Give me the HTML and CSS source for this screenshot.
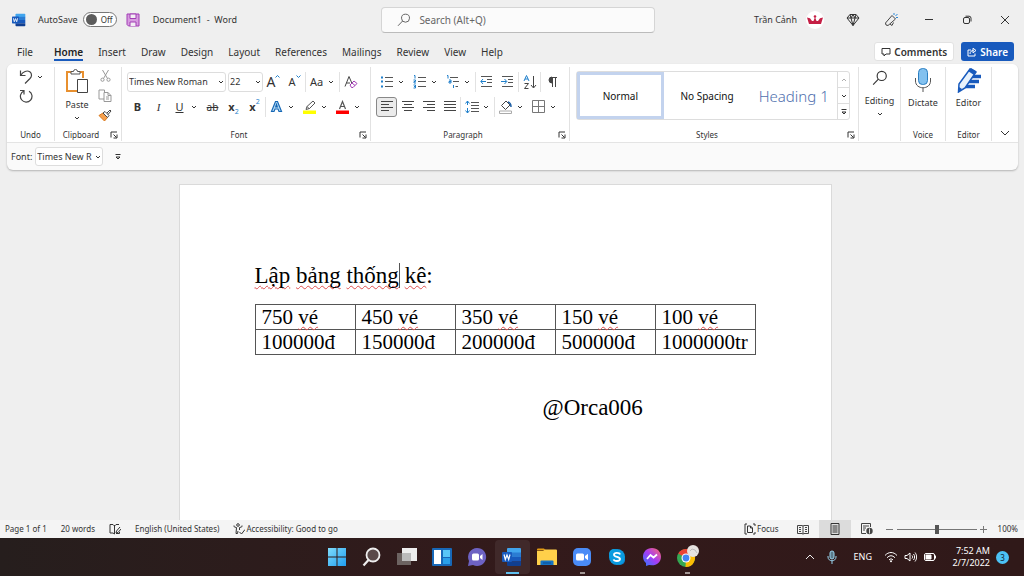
FILE: index.html
```html
<!DOCTYPE html>
<html lang="en">
<head>
  <meta charset="UTF-8">
  <meta name="viewport" content="width=device-width, initial-scale=1.0">
  <title>Document1 - Word</title>
  <link rel="stylesheet" href="styles.css">
</head>
<body>
  <!-- Shared icons -->
  <svg class="sprite" aria-hidden="true">
    <symbol id="chevron" viewBox="0 0 6 6"><path d="M1 2l2 2 2-2" fill="none" stroke="#333" stroke-width="1"/></symbol>
    <symbol id="launcher" viewBox="0 0 8 8"><path d="M1 6.500V1h6M3.500 3.500l3 3M7 3.500V7H3.500" fill="none" stroke="#333" stroke-width="1"/></symbol>
    <symbol id="lens" viewBox="0 0 14 14"><circle cx="8.500" cy="5.200" r="4" fill="none" stroke="currentColor"/><path d="M5.600 8L1 12.800" stroke="currentColor"/></symbol>
    <symbol id="more" viewBox="0 0 8 8"><path d="M1.500 1.500h5M2 4l2 2 2-2z" fill="none" stroke="#333"/></symbol>
    <symbol id="wordlogo" viewBox="0 0 20 20">
      <path d="M6 1h12a1 1 0 0 1 1 1v4H5V2a1 1 0 0 1 1-1z" fill="#41a5ee"/>
      <path d="M5 5.500h14v4.500H5z" fill="#2b7cd3"/>
      <path d="M5 10h14v4.500H5z" fill="#185abd"/>
      <path d="M5 14.500h14V18a1 1 0 0 1-1 1H6a1 1 0 0 1-1-1z" fill="#103f91"/>
      <rect x="0" y="5" width="10" height="10" rx="1" fill="#185abd"/>
      <path d="M2 7.500l1.300 5L5 8l1.700 4.500 1.300-5" fill="none" stroke="#fff" stroke-width="1.200"/>
    </symbol>
  </svg>

  <!-- Title bar -->
  <header class="titlebar">
    <div class="title-left">
      <svg class="app-icon" width="14" height="14"><use href="#wordlogo"/></svg>
      <label class="autosave">AutoSave
        <span class="toggle"><input type="checkbox"><span>Off</span></span>
      </label>
      <button class="save" aria-label="Save">
        <svg width="14" height="14" viewBox="0 0 14 14"><path d="M1 1h12v12H2.500L1 11.500z" fill="#d79be0" stroke="#a13cb4"/><path d="M4 1h6v4.500H4zM4 13V9h6v4" fill="#f3eef4" stroke="#a13cb4"/></svg>
      </button>
      <span>Document1&nbsp; -&nbsp; Word</span>
    </div>
    <label class="search">
      <svg width="14" height="14"><use href="#lens"/></svg>
      <input type="text" placeholder="Search (Alt+Q)" aria-label="Search">
    </label>
    <div class="title-right">
      <span class="user">Trần Cảnh</span>
      <span class="avatar">
        <svg width="18" height="18" viewBox="0 0 18 18"><path d="M1 6.500l3 .8 2 2.700h1.500L9 6l1.500 4H12l2-2.700 3-.8-2 6.500H3z" fill="#c51f45"/><circle cx="9" cy="5.500" r="1.300" fill="#c51f45"/></svg>
      </span>
      <button class="win" aria-label="Premium"><svg width="14" height="14" viewBox="0 0 14 14"><path d="M4 1.500h6l3 3.500-6 7.500L1 5zM1 5h12M4 1.500L5 5l2 7.500L9 5l1-3.500M5 5l2-3.500L9 5" fill="none" stroke="#333"/></svg></button>
      <button class="win" aria-label="Coming soon"><svg width="15" height="15" viewBox="0 0 15 15"><path d="M8 3.500l3.500 3.500-7.500 6.500-2-.5-.5-2zM6 12l2 1.500 1.500-3" fill="none" stroke="#444"/><path d="M10 3V1M11.500 4l2-2M12 5.500h2" stroke="#2b88d8"/></svg></button>
      <button class="win" aria-label="Minimize"><svg width="10" height="10" viewBox="0 0 10 10"><path d="M1 4.500h8" stroke="#333"/></svg></button>
      <button class="win" aria-label="Restore"><svg width="10" height="10" viewBox="0 0 10 10"><rect x="1.500" y="2.500" width="6" height="6" rx="1.500" fill="none" stroke="#333"/><path d="M3.500 1.200H7a2 2 0 0 1 2 2v3.300" fill="none" stroke="#333"/></svg></button>
      <button class="win" aria-label="Close"><svg width="10" height="10" viewBox="0 0 10 10"><path d="M1 1l8 8M9 1L1 9" stroke="#333"/></svg></button>
    </div>
  </header>

  <!-- Tabs -->
  <nav class="tabs">
    <a href="#">File</a>
    <a href="#" class="active">Home</a>
    <a href="#">Insert</a>
    <a href="#">Draw</a>
    <a href="#">Design</a>
    <a href="#">Layout</a>
    <a href="#">References</a>
    <a href="#">Mailings</a>
    <a href="#">Review</a>
    <a href="#">View</a>
    <a href="#">Help</a>
    <div class="tab-actions">
      <button class="comments"><svg width="10" height="10" viewBox="0 0 10 10"><path d="M1 1.500h8v5.500H5L3 9V7H1z" fill="none" stroke="#333"/></svg>Comments</button>
      <button class="share"><svg width="10" height="10" viewBox="0 0 10 10"><path d="M4 3H1v6h7V6.500M3 7c0-2.500 1.500-3.500 3.500-3.500M6 1.200l3 2.300-3 2.300z" fill="none" stroke="#fff"/></svg>Share</button>
    </div>
  </nav>

  <!-- Ribbon -->
  <section class="ribbon">
    <div class="groups">
      <div class="group undo">
        <div class="content">
          <div class="row">
            <button class="icon" aria-label="Undo"><svg width="14" height="16" viewBox="0 0 14 16"><path d="M1.500 1.500v5h5M1.800 6.200C4 2.500 8 1 10.800 2.800c2.500 2 2 4.700.2 6.700L6 14.500" fill="none" stroke="#444" stroke-width="1.200"/></svg></button>
            <button class="drop" aria-label="Undo list"><svg width="6" height="6"><use href="#chevron"/></svg></button>
          </div>
          <div class="row">
            <button class="icon" aria-label="Repeat"><svg width="14" height="14" viewBox="0 0 14 14"><path d="M1 1.500h4v4M4.800 2A5.800 5.800 0 1 0 10 2.200" fill="none" stroke="#444" stroke-width="1.200"/></svg></button>
          </div>
        </div>
        <div class="caption"><span>Undo</span></div>
      </div>

      <div class="group clipboard">
        <div class="content">
          <button class="big">
            <svg width="24" height="27" viewBox="0 0 24 27"><path d="M6 4H2v19h10M15 4h3v6" fill="none" stroke="#e8902f" stroke-width="2"/><path d="M6 6V3.500h2.500a2 2 0 0 1 4 0H15V6z" fill="#fff" stroke="#555"/><path d="M12.500 11.500h10v13h-10z" fill="#fff" stroke="#444"/></svg>
            Paste
            <svg width="6" height="6"><use href="#chevron"/></svg>
          </button>
          <div class="stack">
            <button aria-label="Cut"><svg width="13" height="13" viewBox="0 0 13 13"><path d="M3.500 1l5 8.500M9.500 1l-5 8.500" stroke="#999"/><circle cx="3.500" cy="10.700" r="1.600" fill="none" stroke="#999"/><circle cx="9.500" cy="10.700" r="1.600" fill="none" stroke="#999"/></svg></button>
            <button aria-label="Copy"><svg width="14" height="13" viewBox="0 0 14 13"><path d="M6 10H1V1h5.500v2M6 3.500h4l3 3v6H6zM10 3.500v3h3M8 8h3M8 10h3" fill="none" stroke="#999"/></svg></button>
            <button aria-label="Format Painter"><svg width="14" height="13" viewBox="0 0 14 13"><path d="M1 6.500l4-2.500 4.500 4.500L6.500 12z" fill="#f6a04d" stroke="#d9771a"/><path d="M5 4l2-1.500 4 4L9.500 8.500zM9 4l3-3 1 1-3 3.500" fill="#fff" stroke="#444"/></svg></button>
          </div>
        </div>
        <div class="caption"><span>Clipboard</span><button aria-label="Clipboard options"><svg width="8" height="8"><use href="#launcher"/></svg></button></div>
      </div>

      <div class="group font">
        <div class="content">
          <div class="row">
            <select class="combo name" aria-label="Font name"><option>Times New Roman</option></select>
            <select class="combo size" aria-label="Font size"><option>22</option></select>
            <button class="icon" aria-label="Increase font size"><span class="glyph large">A</span><svg class="sup" width="5" height="5" viewBox="0 0 5 5"><path d="M.500 3.500l2-2 2 2" fill="none" stroke="#1e7fcb"/></svg></button>
            <button class="icon" aria-label="Decrease font size"><span class="glyph">A</span><svg class="sup" width="5" height="5" viewBox="0 0 5 5"><path d="M.500 1.500l2 2 2-2" fill="none" stroke="#1e7fcb"/></svg></button>
            <i class="sep"></i>
            <button class="icon" aria-label="Change case"><span class="glyph">Aa</span></button>
            <button class="drop" aria-label="Case list"><svg width="6" height="6"><use href="#chevron"/></svg></button>
            <i class="sep"></i>
            <button class="icon" aria-label="Clear formatting"><svg width="14" height="14" viewBox="0 0 14 14"><path d="M1 11.500L5 1.500l3 7M2.500 8H6" fill="none" stroke="#444"/><path d="M6 10l4-4 3 2.500-4 4H7.500z" fill="#fff" stroke="#a13cb4"/><path d="M8 8l3 2.500" stroke="#a13cb4"/></svg></button>
          </div>
          <div class="row">
            <button class="icon"><b>B</b></button>
            <button class="icon"><em>I</em></button>
            <button class="icon"><u>U</u></button>
            <button class="drop" aria-label="Underline list"><svg width="6" height="6"><use href="#chevron"/></svg></button>
            <button class="icon"><s>ab</s></button>
            <button class="icon script"><b>x</b><sub>2</sub></button>
            <button class="icon script"><b>x</b><sup>2</sup></button>
            <i class="sep"></i>
            <button class="icon" aria-label="Text effects"><svg width="13" height="13" viewBox="0 0 13 13"><path d="M1.500 11.500L5.500 1.500h2l4 10H9L8 9H5l-1 2.500zM5.700 7h1.600L6.500 4.500z" fill="#b8dcf5" stroke="#1567b5" stroke-width="1.200"/></svg></button>
            <button class="drop" aria-label="Effects list"><svg width="6" height="6"><use href="#chevron"/></svg></button>
            <button class="icon" aria-label="Highlight"><svg width="14" height="14" viewBox="0 0 14 14"><path d="M0 10.500h13V14H0z" fill="#ffff00"/><path d="M3 9.500l1-3L10 1l2 2-5.500 5.500zM4 6.500L6.500 9" fill="#fff" stroke="#555"/></svg></button>
            <button class="drop" aria-label="Highlight list"><svg width="6" height="6"><use href="#chevron"/></svg></button>
            <button class="icon" aria-label="Font color"><svg width="14" height="14" viewBox="0 0 14 14"><path d="M0 10.500h13V14H0z" fill="#fe0000"/><path d="M3.500 9l3-7.500L9.500 9M4.500 6.500h4" fill="none" stroke="#555" stroke-width="1.200"/></svg></button>
            <button class="drop" aria-label="Color list"><svg width="6" height="6"><use href="#chevron"/></svg></button>
          </div>
        </div>
        <div class="caption"><span>Font</span><button aria-label="Font options"><svg width="8" height="8"><use href="#launcher"/></svg></button></div>
      </div>

      <div class="group paragraph">
        <div class="content">
          <div class="row">
            <button class="icon" aria-label="Bullets"><svg width="14" height="14" viewBox="0 0 14 14"><path d="M1 2.500h2M1 6.500h2M1 11.500h2" stroke="#1e7fcb" stroke-width="2"/><path d="M5 2.500h8M5 6.500h8M5 11.500h8" stroke="#555"/></svg></button>
            <button class="drop" aria-label="Bullet list"><svg width="6" height="6"><use href="#chevron"/></svg></button>
            <button class="icon" aria-label="Numbering"><svg width="14" height="14" viewBox="0 0 14 14"><path d="M1 .500h1v3M.500 5h2v1.500h-1.500V8h2M.500 10h2v3h-2M1 11.500h1.500" fill="none" stroke="#1e7fcb"/><path d="M5 2.500h8M5 6.500h8M5 11.500h8" stroke="#555"/></svg></button>
            <button class="drop" aria-label="Numbering list"><svg width="6" height="6"><use href="#chevron"/></svg></button>
            <button class="icon" aria-label="Multilevel list"><svg width="14" height="14" viewBox="0 0 14 14"><path d="M1 .500h1v3M3 5h2v3H3V6.500h2M7.500 10v3" fill="none" stroke="#1e7fcb"/><path d="M4 2.500h8M7 6.500h6M9.500 11.500H12" stroke="#555"/></svg></button>
            <button class="drop" aria-label="Multilevel options"><svg width="6" height="6"><use href="#chevron"/></svg></button>
            <i class="sep"></i>
            <button class="icon" aria-label="Decrease indent"><svg width="13" height="13" viewBox="0 0 13 13"><path d="M1 1.500h11M7 4.500h5M7 7.500h5M1 11.500h11" stroke="#555"/><path d="M6 6.500H1M3 4L.800 6.500 3 9" fill="none" stroke="#1e7fcb"/></svg></button>
            <button class="icon" aria-label="Increase indent"><svg width="13" height="13" viewBox="0 0 13 13"><path d="M1 1.500h11M7 4.500h5M7 7.500h5M1 11.500h11" stroke="#555"/><path d="M0 6.500h5.500M3.500 4l2.300 2.500L3.500 9" fill="none" stroke="#1e7fcb"/></svg></button>
            <i class="sep"></i>
            <button class="icon" aria-label="Sort"><svg width="14" height="14" viewBox="0 0 14 14"><path d="M1 6l2.500-5.500L6 6M2 4h3" fill="none" stroke="#1e7fcb"/><path d="M1.500 8.500h4l-4 5h4M10.500 1v11.500M8 10l2.500 3L13 10" fill="none" stroke="#444"/></svg></button>
            <i class="sep"></i>
            <button class="icon" aria-label="Show marks"><svg width="12" height="12" viewBox="0 0 12 12"><path d="M6 1a3 3 0 0 0 0 6zM6.500 1v10M9.500 1v10M5 1.500h6" fill="#444" stroke="#444"/></svg></button>
          </div>
          <div class="row">
            <button class="icon on" aria-label="Align left"><svg width="12" height="13" viewBox="0 0 12 13"><path d="M0 1.500h12M0 4.500h8M0 7.500h12M0 10.500h8" stroke="#444"/></svg></button>
            <button class="icon" aria-label="Center"><svg width="12" height="13" viewBox="0 0 12 13"><path d="M0 1.500h12M2 4.500h8M0 7.500h12M2 10.500h8" stroke="#444"/></svg></button>
            <button class="icon" aria-label="Align right"><svg width="12" height="13" viewBox="0 0 12 13"><path d="M0 1.500h12M4 4.500h8M0 7.500h12M4 10.500h8" stroke="#444"/></svg></button>
            <button class="icon" aria-label="Justify"><svg width="12" height="13" viewBox="0 0 12 13"><path d="M0 1.500h12M0 4.500h12M0 7.500h12M0 10.500h12" stroke="#444"/></svg></button>
            <i class="sep"></i>
            <button class="icon" aria-label="Line spacing"><svg width="14" height="14" viewBox="0 0 14 14"><path d="M2.500 1v4M.500 3.500l2-2.500 2 2.500M2.500 13V8M.500 10.500l2 2.500 2-2.500" fill="none" stroke="#1e7fcb"/><path d="M6 2.500h8M6 5.500h8M6 8.500h8M6 11.500h8" stroke="#555"/></svg></button>
            <button class="drop" aria-label="Spacing list"><svg width="6" height="6"><use href="#chevron"/></svg></button>
            <i class="sep"></i>
            <button class="icon" aria-label="Shading"><svg width="14" height="14" viewBox="0 0 14 14"><path d="M.500 11h12v2.500H.500z" fill="#fff" stroke="#aaa"/><path d="M7 1L2.500 5.500l4 4L11 5z" fill="#fff" stroke="#444"/><path d="M9 2c2 .5 3 2 3 5" fill="none" stroke="#1e5fa5" stroke-width="1.500"/></svg></button>
            <button class="drop" aria-label="Shading list"><svg width="6" height="6"><use href="#chevron"/></svg></button>
            <button class="icon" aria-label="Borders"><svg width="13" height="13" viewBox="0 0 13 13"><path d="M.500.500h12v12H.500zM6.500.500v12M.500 6.500h12" fill="none" stroke="#777"/></svg></button>
            <button class="drop" aria-label="Border list"><svg width="6" height="6"><use href="#chevron"/></svg></button>
          </div>
        </div>
        <div class="caption"><span>Paragraph</span><button aria-label="Paragraph options"><svg width="8" height="8"><use href="#launcher"/></svg></button></div>
      </div>

      <div class="group styles">
        <div class="content">
          <div class="gallery">
            <button class="style selected">Normal</button>
            <button class="style">No Spacing</button>
            <button class="style heading">Heading 1</button>
            <div class="scroller">
              <button class="dim" aria-label="Previous styles"><svg class="flip" width="6" height="6"><use href="#chevron"/></svg></button>
              <button aria-label="Next styles"><svg width="6" height="6"><use href="#chevron"/></svg></button>
              <button aria-label="All styles"><svg width="8" height="8"><use href="#more"/></svg></button>
            </div>
          </div>
        </div>
        <div class="caption"><span>Styles</span><button aria-label="Style options"><svg width="8" height="8"><use href="#launcher"/></svg></button></div>
      </div>

      <div class="group editing">
        <div class="content">
          <button class="big"><svg width="16" height="24" viewBox="0 0 16 24"><use href="#lens" width="16" height="16" y="3"/></svg>Editing<svg width="6" height="6"><use href="#chevron"/></svg></button>
        </div>
      </div>

      <div class="group voice">
        <div class="content">
          <button class="big"><svg width="18" height="26" viewBox="0 0 18 26"><rect x="4.500" y="1.500" width="9" height="16" rx="4" fill="#83c1ef" stroke="#2b7fc3"/><path d="M1.500 11v3c0 9 15 9 15 0v-3M9 21v4" fill="none" stroke="#555"/></svg>Dictate</button>
        </div>
        <div class="caption"><span>Voice</span></div>
      </div>

      <div class="group editor">
        <div class="content">
          <button class="big"><svg width="26" height="26" viewBox="0 0 26 26"><path d="M15 9.500h10M12 14.500h11M9 19.500h10" stroke="#185abd" stroke-width="3.500"/><path d="M14 2l6 3L9 21l-6.500 4 .5-8z" fill="#e8f2fc" stroke="#185abd" stroke-width="1.500"/><path d="M15 1l5 3-2 4-6-4zM3 20l3 2-4 3z" fill="#185abd"/></svg>Editor</button>
        </div>
        <div class="caption"><span>Editor</span></div>
      </div>

      <button class="collapse" aria-label="Collapse ribbon"><svg width="10" height="8" viewBox="0 0 10 8"><path d="M1 2l4 4 4-4" fill="none" stroke="#333"/></svg></button>
    </div>

    <div class="quickbar">
      <label for="quickfont">Font:</label>
      <select class="combo quick" id="quickfont"><option>Times New R</option></select>
      <button aria-label="Customize toolbar"><svg width="8" height="8"><use href="#more"/></svg></button>
    </div>
  </section>

  <!-- Document -->
  <main class="workspace">
    <article class="page">
      <p class="line"><span class="typo">Lập</span> <span class="typo">bảng</span> <span class="typo">thống</span><span class="caret"></span> <span class="typo">kê</span>:</p>
      <table>
        <tr>
          <td>750 <span class="typo">vé</span></td>
          <td>450 <span class="typo">vé</span></td>
          <td>350 <span class="typo">vé</span></td>
          <td>150 <span class="typo">vé</span></td>
          <td>100 <span class="typo">vé</span></td>
        </tr>
        <tr>
          <td>100000đ</td>
          <td>150000đ</td>
          <td>200000đ</td>
          <td>500000đ</td>
          <td>1000000tr</td>
        </tr>
      </table>
      <p class="line signature">@Orca006</p>
    </article>
  </main>

  <!-- Status bar -->
  <footer class="statusbar">
    <span class="pages">Page 1 of 1</span>
    <span class="words">20 words</span>
    <svg class="proof" width="12" height="12" viewBox="0 0 12 12"><path d="M5.500 2v9M1 1.500h3L5.500 3 7 1.500h3M1 1.500v8.500h3l1.500 1M11 4L7.500 8l-.5 2 2-.5L12 6M10.500 9v1.500H7" fill="none" stroke="#333"/></svg>
    <span class="language">English (United States)</span>
    <span class="access"><svg width="12" height="12" viewBox="0 0 12 12"><circle cx="5" cy="2" r="1.300" fill="none" stroke="#333"/><path d="M1 2.500c-.5 1 0 1.500 2.500 2L3 10.500h1.500L5 8M9 2.500c.5 1 0 1.500-2.500 2V7M6.500 9l2 2L12 6.500" fill="none" stroke="#333"/></svg>Accessibility: Good to go</span>
    <div class="views">
      <button class="focus"><svg width="12" height="12" viewBox="0 0 12 12"><path d="M3 1H1v10h2M9 1h2v2M11 9v2H9M3.500 3h3l2 2v4.500h-5zM6.500 3v2h2" fill="none" stroke="#333"/></svg>Focus</button>
      <button class="view" aria-label="Read mode"><svg width="12" height="11" viewBox="0 0 12 11"><path d="M.500 1.500H5l1 .5 1-.5h4.500v8H7l-1 .7-1-.7H.500zM6 2v8M2 3.500h2M2 5.500h2M2 7.500h2M8 3.500h2M8 5.500h2M8 7.500h2" fill="none" stroke="#444"/></svg></button>
      <button class="view on" aria-label="Print layout"><svg width="10" height="12" viewBox="0 0 10 12"><path d="M1 .500h8v11H1zM2.500 3h5M2.500 5h5M2.500 7h5M2.500 9h5" fill="none" stroke="#333"/></svg></button>
      <button class="view" aria-label="Web layout"><svg width="12" height="12" viewBox="0 0 12 12"><path d="M5 10.500H.500v-10h9V4M2 3h6M2 5h3M2 7h2" fill="none" stroke="#444"/><circle cx="8.500" cy="8" r="3.200" fill="#444"/><path d="M8.500 5.500v5" stroke="#ddd"/></svg></button>
      <button class="zoom-step" aria-label="Zoom out"><svg width="7" height="7" viewBox="0 0 7 7"><path d="M0 3.500h7" stroke="#777"/></svg></button>
      <input type="range" min="0" max="100" value="50" aria-label="Zoom">
      <button class="zoom-step" aria-label="Zoom in"><svg width="7" height="7" viewBox="0 0 7 7"><path d="M0 3.500h7M3.500 0v7" stroke="#777"/></svg></button>
      <span class="percent">100%</span>
    </div>
  </footer>

  <!-- Taskbar -->
  <nav class="taskbar">
    <div class="apps">
      <button aria-label="Start"><svg width="20" height="20" viewBox="0 0 20 20"><defs><linearGradient id="win" x1="0" y1="0" x2="1" y2="1"><stop offset="0" stop-color="#7fdcfb"/><stop offset="1" stop-color="#1f9df0"/></linearGradient></defs><path d="M1 1h8.500v8.500H1zM10.500 1H19v8.500h-8.500zM1 10.500h8.500V19H1zM10.500 10.500H19V19h-8.500z" fill="url(#win)"/></svg></button>
      <button aria-label="Search"><svg width="20" height="20" viewBox="0 0 20 20"><circle cx="11" cy="8" r="6.500" fill="#5a4a4a" stroke="#eee" stroke-width="1.800"/><path d="M6.500 13L1.500 18.500" stroke="#eee" stroke-width="2.200"/></svg></button>
      <button aria-label="Task view"><svg width="20" height="20" viewBox="0 0 20 20"><path d="M0 6h14v12H0z" fill="#6c6361"/><path d="M5 1h15v13H5z" fill="#eee"/><path d="M5 6h9v8H5z" fill="#bbb"/></svg></button>
      <button aria-label="Widgets"><svg width="20" height="20" viewBox="0 0 20 20"><rect y="1" width="20" height="18" rx="1" fill="#1768b8"/><path d="M2 3h7v14H2z" fill="#fff"/><path d="M11 3h7v7h-7z" fill="#58c7f7"/><path d="M11 11h7v6h-7z" fill="#2aa0ea"/></svg></button>
      <button aria-label="Chat"><svg width="20" height="20" viewBox="0 0 20 20"><path d="M10 1a9 9 0 1 1-4 17l-5 1 1-5A9 9 0 0 1 10 1z" fill="#6d62c3"/><rect x="5" y="6.500" width="7" height="7" rx="1.500" fill="#fff"/><path d="M13 9l2.500-2v6L13 11z" fill="#fff"/></svg></button>
      <button class="running" aria-label="Word"><svg width="20" height="20"><use href="#wordlogo"/></svg></button>
      <button aria-label="File Explorer"><svg width="20" height="20" viewBox="0 0 20 20"><path d="M0 2.500a1 1 0 0 1 1-1h6l2 2H0z" fill="#e39b12"/><path d="M0 4h6l2-1.500h11a1 1 0 0 1 1 1V18H0z" fill="#ffd04a"/><path d="M3.500 18v-3.500a1 1 0 0 1 1-1h11a1 1 0 0 1 1 1V18z" fill="#1573c4"/><path d="M6 16h8" stroke="#0c4f91"/></svg></button>
      <button class="open" aria-label="Zoom"><svg width="20" height="20" viewBox="0 0 20 20"><rect x="1" y="1" width="18" height="18" rx="5" fill="#4a8cf7"/><rect x="4" y="6.500" width="8" height="7" rx="1.500" fill="#fff"/><path d="M13 9l3-2.200v6.400L13 11z" fill="#fff"/></svg></button>
      <button aria-label="Skype"><svg width="20" height="20" viewBox="0 0 20 20"><circle cx="7" cy="7" r="5" fill="#0ea5e6"/><circle cx="13" cy="13" r="5" fill="#0b86d1"/><circle cx="10" cy="10" r="8" fill="#0a9be0"/><path d="M13 7.500c-.5-2-6-2.300-6 .3 0 2.700 6 1.600 6 4.300 0 2.600-6 2.400-6.300.2" fill="none" stroke="#fff" stroke-width="1.800"/></svg></button>
      <button aria-label="Messenger"><svg width="20" height="20" viewBox="0 0 20 20"><defs><linearGradient id="msg" x1="0" y1="1" x2="1" y2="0"><stop offset="0" stop-color="#2a7bff"/><stop offset=".5" stop-color="#a63cf5"/><stop offset="1" stop-color="#ff6a6a"/></linearGradient></defs><path d="M10 1c5.500 0 9 4 9 8.700 0 5-4 8.600-9 8.600l-3-.4L4 19v-3C2 14.300 1 12.300 1 9.700 1 5 4.500 1 10 1z" fill="url(#msg)"/><path d="M5 12l3.500-4 3 2.500L15 7.500" fill="none" stroke="#fff" stroke-width="1.800"/></svg></button>
      <button class="open" aria-label="Chrome"><svg width="24" height="24" viewBox="0 0 24 24"><circle cx="11" cy="13" r="9" fill="#34a853"/><path d="M11 13L3.200 8.500A9 9 0 0 1 18.800 8.500z" fill="#ea4335"/><path d="M11 13l7.800-4.500A9 9 0 0 1 10.500 22z" fill="#fbbc05"/><circle cx="11" cy="13" r="4.500" fill="#fff"/><circle cx="11" cy="13" r="3.400" fill="#4285f4"/><circle cx="18" cy="6" r="6" fill="#e6e3e0"/><path d="M15 6l2-2 3 1 2 3" fill="none" stroke="#bbb"/></svg></button>
    </div>
    <div class="tray">
      <svg class="up" width="10" height="8" viewBox="0 0 10 8"><path d="M1 6l4-4 4 4" fill="none" stroke="#eee"/></svg>
      <svg class="mic" width="10" height="14" viewBox="0 0 10 14"><rect x="3" y="1" width="4" height="8" rx="2" fill="#5b7a8a" stroke="#9ad4ee"/><path d="M1 6v1c0 5 8 5 8 0V6M5 11v3" fill="none" stroke="#9ad4ee"/></svg>
      <span class="lang">ENG</span>
      <svg width="14" height="12" viewBox="0 0 14 12"><path d="M1 4.500c3.500-4 8.500-4 12 0M3 6.800c2.500-2.700 5.500-2.700 8 0M5 9c1.500-1.500 2.500-1.500 4 0" fill="none" stroke="#fff"/><circle cx="7" cy="10.300" r="1" fill="#fff"/></svg>
      <svg width="13" height="12" viewBox="0 0 13 12"><path d="M1 4.500h2L6 2v8L3 7.500H1zM8 4.500c.8 1 .8 2 0 3M9.500 3c1.500 2 1.500 4 0 6M11 1.500c2.200 3 2.200 6 0 9" fill="none" stroke="#fff"/></svg>
      <svg width="14" height="12" viewBox="0 0 14 12"><rect x="1.500" y="2.500" width="10" height="7" rx="1.500" fill="none" stroke="#fff"/><path d="M3 4h5v4H3zM12.500 4.500v3" fill="#fff" stroke="#fff"/></svg>
      <div class="clock"><span>7:52 AM</span><span>2/7/2022</span></div>
      <span class="count">3</span>
    </div>
  </nav>
</body>
</html>
```
FILE: styles.css
```css
* {
  box-sizing: border-box;
}

body {
  display: flex;
  flex-direction: column;
  height: 100vh;
  margin: 0;
  overflow: hidden;
  background-color: #efefef;
  color: #333;
  font-family: "Noto Sans", "Open Sans", sans-serif;
  font-size: 9px;
  line-height: 12px;
}

button,
input,
select {
  margin: 0;
  padding: 0;
  border: none;
  background: none;
  color: inherit;
  font: inherit;
}

button {
  display: flex;
  align-items: center;
  justify-content: center;
  cursor: pointer;
}

svg {
  flex: none;
}

.sprite {
  position: absolute;
  width: 0;
  height: 0;
}

/* Title bar */
.titlebar {
  display: grid;
  grid-template-columns: 1fr 27% 1fr;
  align-items: center;
  height: 39px;
  padding-left: 12px;
}

.title-left {
  display: flex;
  align-items: center;
}

.app-icon {
  margin-right: 12px;
}

.autosave {
  display: flex;
  align-items: center;
  gap: 5px;
}

.toggle {
  display: flex;
  align-items: center;
  gap: 4px;
  width: 34px;
  height: 15px;
  padding-left: 2px;
  border: 1px solid #777;
  border-radius: 8px;
  background-color: #fff;
  font-size: 8px;
}

.toggle input {
  appearance: none;
  width: 11px;
  height: 11px;
  border-radius: 50%;
  background-color: #5c5c5c;
}

.save {
  margin: 0 13px 0 9px;
}

.search {
  display: flex;
  align-items: center;
  gap: 8px;
  height: 26px;
  padding-left: 15px;
  border: 1px solid #d5d5d5;
  border-bottom-color: #bbb;
  border-radius: 4px;
  background-color: #fbfbfb;
  color: #666;
}

.search input {
  flex: 1;
  font-size: 10px;
}

.search input::placeholder {
  color: #666;
}

.title-right {
  display: flex;
  align-items: center;
  justify-content: flex-end;
}

.avatar {
  display: flex;
  width: 18px;
  height: 18px;
  margin: 0 10px 0 9px;
  border-radius: 50%;
  background-color: #fff;
}

.win {
  width: 38px;
  height: 30px;
}

.win:hover {
  background-color: #e0e0e0;
}

/* Tabs */
.tabs {
  display: flex;
  align-items: center;
  gap: 15px;
  height: 25px;
  padding: 0 10px 0 17px;
  font-size: 10px;
}

.tabs a {
  padding: 3px 0 1px;
  border-bottom: 2px solid transparent;
  color: #333;
  text-decoration: none;
}

.tabs .active {
  margin-left: 6px;
  border-color: #185abd;
  color: #222;
  font-weight: 600;
}

.tab-actions {
  display: flex;
  gap: 7px;
  margin-left: auto;
}

.comments,
.share {
  gap: 3px;
  height: 19px;
  padding: 0 6px;
  border-radius: 3px;
  background-color: #fff;
  font-weight: 600;
}

.comments {
  border: 1px solid #e2e2e2;
}

.share {
  background-color: #185abd;
  color: #fff;
}

/* Ribbon */
.ribbon {
  margin: 0 6px 0 7px;
  border-radius: 6px;
  background-color: #fafafa;
  box-shadow: 0 1px 2px rgba(0, 0, 0, 0.25);
}

.groups {
  display: flex;
  height: 79px;
  padding: 3px 0 1px;
  border-bottom: 1px solid #e4e4e4;
  border-radius: 6px 6px 0 0;
  background-color: #fff;
}

.group {
  display: flex;
  flex-direction: column;
  justify-content: space-between;
  border-right: 1px solid #e2e2e2;
}

.content {
  display: flex;
}

.caption {
  display: flex;
  align-items: center;
  height: 13px;
  font-size: 8px;
}

.caption span {
  flex: 1;
  text-align: center;
}

.caption button {
  width: 14px;
}

.row {
  display: flex;
  align-items: center;
  height: 21px;
}

.icon {
  width: 21px;
  height: 20px;
  border-radius: 3px;
  font-size: 11px;
}

.icon:hover {
  background-color: #f0f0f0;
}

.icon.on {
  border: 1px solid #888;
  background-color: #ebebeb;
}

.drop {
  width: 12px;
  height: 20px;
  padding-right: 4px;
}

.sep {
  width: 1px;
  height: 20px;
  background-color: #e2e2e2;
}

.undo {
  width: 48px;
}

.undo .content,
.font .content,
.paragraph .content {
  flex-direction: column;
}

.undo .content {
  padding-left: 8px;
}

.undo .row {
  height: 19px;
}

.clipboard {
  width: 67px;
}

.clipboard .content {
  justify-content: space-between;
  padding: 0 9px 0 10px;
}

.big {
  flex-direction: column;
  gap: 4px;
  font-size: 9px;
}

.stack {
  display: flex;
  flex-direction: column;
  gap: 7px;
  padding-top: 2px;
}

.font {
  width: 249px;
}

.font .content,
.paragraph .content {
  gap: 4px;
  padding: 4px 0 0 5px;
}

.combo {
  appearance: none;
  height: 20px;
  padding-left: 1px;
  border: 1px solid #ddd;
  border-radius: 3px;
  background: #fff url("data:image/svg+xml,%3Csvg xmlns='http://www.w3.org/2000/svg' width='6' height='6'%3E%3Cpath d='M1 2l2 2 2-2' fill='none' stroke='%23333'/%3E%3C/svg%3E") no-repeat right 1px center;
}

.name {
  width: 99px;
  margin-right: 2px;
}

.size {
  width: 35px;
}

.glyph.large {
  font-size: 14px;
}

.sup {
  align-self: flex-start;
  margin-top: 2px;
}

.icon em {
  font-family: "Liberation Serif", serif;
}

.icon s {
  font-size: 10px;
}

.script sub,
.script sup {
  color: #1e7fcb;
  font-size: 7px;
  line-height: 10px;
}

.script sub {
  align-self: flex-end;
}

.script sup {
  align-self: flex-start;
}

.paragraph {
  width: 199px;
}

.styles {
  flex: 1;
}

.styles .content {
  padding: 4px 8px 0 6px;
}

.gallery {
  display: flex;
  flex: 1;
  height: 49px;
  border: 1px solid #ddd;
  border-radius: 3px;
}

.style {
  flex: 1;
  border: 3px solid transparent;
  color: #111;
  font-size: 10px;
}

.style.selected {
  border-color: #c3d3ee;
}

.style.heading {
  color: #4f6fae;
  font-size: 15px;
  font-weight: 300;
}

.scroller {
  display: flex;
  flex-direction: column;
  width: 12px;
  border-left: 1px solid #ddd;
}

.scroller button {
  flex: 1;
}

.scroller button + button {
  border-top: 1px solid #ddd;
}

.dim {
  opacity: 0.4;
}

.flip {
  transform: rotate(180deg);
}

.editing {
  width: 42px;
}

.voice {
  width: 45px;
}

.editor {
  width: 46px;
}

.editing .content,
.voice .content,
.editor .content {
  justify-content: center;
}

.collapse {
  align-self: flex-end;
  width: 26px;
  height: 16px;
}

.quickbar {
  display: flex;
  align-items: center;
  height: 27px;
  padding-left: 4px;
}

.quick {
  height: 19px;
  width: 68px;
  margin: 0 11px 0 3px;
}

/* Document */
.workspace {
  flex: 1;
  min-height: 0;
  padding: 14px 14px 0 0;
  overflow: hidden;
}

.page {
  width: 653px;
  height: 800px;
  margin: 0 auto;
  padding: 76px 75px;
  border: 1px solid #dadada;
  background-color: #fff;
  color: #000;
  font-family: "Liberation Serif", "Times New Roman", serif;
}

.line {
  margin: 0;
  font-size: 23px;
  line-height: 30px;
}

.typo {
  text-decoration: underline wavy #e05050 1px;
  text-decoration-skip-ink: none;
  text-underline-offset: 2px;
}

.caret {
  margin-right: -1px;
  border-left: 1px solid #555;
}

.page table {
  width: 100%;
  margin: 13px 0 38px;
  border-collapse: collapse;
  table-layout: fixed;
  font-size: 21px;
  line-height: 24px;
}

.page td {
  padding: 0 0 0 6px;
  border: 1px solid #555;
}

.signature {
  padding-left: 288px;
}

/* Status bar */
.statusbar {
  display: flex;
  align-items: center;
  height: 18px;
  padding: 0 6px 0 5px;
  background-color: #f4f4f4;
  font-size: 8px;
}

.pages,
.words,
.language,
.proof {
  margin-right: 14px;
}

.access,
.focus {
  display: flex;
  align-items: center;
  gap: 1px;
}

.views {
  display: flex;
  align-items: center;
  margin-left: auto;
}

.focus {
  margin-right: 8px;
}

.view {
  width: 32px;
  height: 18px;
}

.view.on {
  background-color: #dcdcdc;
}

.zoom-step {
  width: 14px;
  height: 18px;
}

.statusbar input {
  appearance: none;
  width: 80px;
  height: 9px;
  background: linear-gradient(#777, #777) no-repeat center / 100% 1px;
}

.statusbar input::-webkit-slider-thumb {
  appearance: none;
  width: 4px;
  height: 9px;
  background-color: #555;
}

.percent {
  margin-left: 7px;
}

/* Taskbar */
.taskbar {
  display: grid;
  grid-template-columns: 1fr auto 1fr;
  align-items: center;
  height: 38px;
  background: linear-gradient(90deg, #261e1d, #331a1b 50%, #301919);
  color: #fff;
}

.apps {
  display: flex;
  grid-column: 2;
}

.apps button {
  width: 35px;
  height: 34px;
}

.apps .running {
  border-radius: 4px;
  background: #40292a linear-gradient(#5fc0ef, #5fc0ef) no-repeat center bottom / 13px 2px;
}

.apps .open {
  background: linear-gradient(#a39795, #a39795) no-repeat center bottom / 5px 2px;
}

.tray {
  display: flex;
  align-items: center;
  justify-content: flex-end;
  gap: 6px;
  padding-right: 15px;
}

.up,
.lang {
  margin-right: 6px;
}

.mic {
  margin-right: 11px;
}

.clock {
  display: flex;
  flex-direction: column;
  width: 47px;
  text-align: right;
}

.count {
  width: 13px;
  height: 13px;
  border-radius: 50%;
  background-color: #4cc2f5;
  color: #123;
  font-size: 8px;
  line-height: 13px;
  text-align: center;
}
```
